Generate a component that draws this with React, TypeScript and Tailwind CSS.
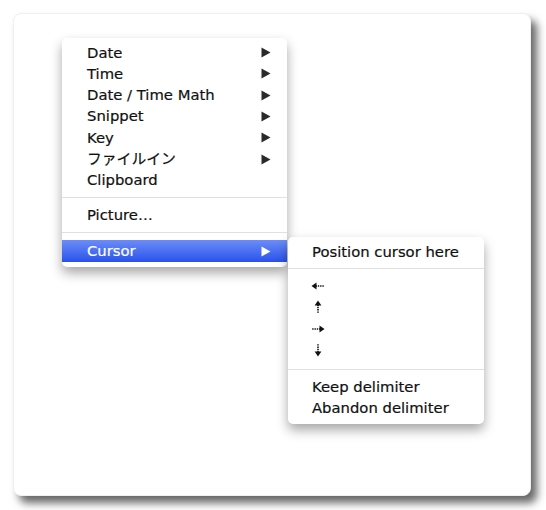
const font = { fontFamily: '"DejaVu Sans", "Noto Sans CJK JP", sans-serif' };

function Tri({ white }: { white?: boolean }) {
  return (
    <svg width="10" height="11" viewBox="0 0 10 11" className="shrink-0">
      <path d="M0.5 0.5 L9.5 5.5 L0.5 10.5 Z" fill={white ? "#ffffff" : "#2a2a2a"} />
    </svg>
  );
}

function Row({ label, sub, active }: { label: string; sub?: boolean; active?: boolean }) {
  return (
    <div
      className={`flex h-[21.3px] items-center justify-between pl-[25px] pr-[16px] ${
        active ? "bg-gradient-to-b from-[#6d8cf8] to-[#2a50ea] text-white" : "text-[#111]"
      }`}
    >
      <span className="whitespace-nowrap">{label}</span>
      {sub && <Tri white={active} />}
    </div>
  );
}

function DotArrow({ dir }: { dir: "left" | "up" | "right" | "down" }) {
  const rot = { left: 0, up: 90, right: 180, down: 270 }[dir];
  return (
    <svg width="14" height="14" viewBox="0 0 14 14">
      <g transform={`rotate(${rot} 7 7)`}>
        <path d="M4.5 7 H13.5" stroke="#111" strokeWidth="1.6" strokeDasharray="1.4 0.9" />
        <path d="M0.5 7 L5.5 3.6 L5.5 10.4 Z" fill="#111" />
      </g>
    </svg>
  );
}

function Sep({ cls }: { cls: string }) {
  return <div className={`h-px bg-[#e0e0e0] ${cls}`} />;
}

export default function App() {
  return (
    <div
      className="h-[510px] w-[546px] overflow-hidden bg-white pl-[13px] pt-[13px] text-[14.8px] [-webkit-text-stroke:0.2px_currentColor]"
      style={font}
    >
      <div className="h-[483px] w-[518px] rounded-[8px] border border-[#f0f0f0] bg-white shadow-[6px_7px_8px_rgba(0,0,0,0.6)]">
        <div className="ml-[48px] mt-[24px] flex items-start">
          <div className="w-[225px] rounded-[5px] bg-white pb-[5px] pt-[4px] shadow-[0_6px_12px_rgba(0,0,0,0.35)]">
            <Row label="Date" sub />
            <Row label="Time" sub />
            <Row label="Date / Time Math" sub />
            <Row label="Snippet" sub />
            <Row label="Key" sub />
            <Row label="ファイルイン" sub />
            <Row label="Clipboard" />
            <Sep cls="my-[6px]" />
            <Row label="Picture…" />
            <Sep cls="my-[7px]" />
            <Row label="Cursor" sub active />
          </div>
          <div className="ml-px mt-[199px] w-[196px] rounded-[5px] bg-white pb-[5px] pt-[4px] shadow-[0_6px_12px_rgba(0,0,0,0.35)]">
            <div className="flex h-[21.3px] items-center pl-[24px] text-[#111]">Position cursor here</div>
            <Sep cls="my-[6px]" />
            {(["left", "up", "right", "down"] as const).map((d) => (
              <div key={d} className="flex h-[21.3px] items-center pl-[23px]">
                <DotArrow dir={d} />
              </div>
            ))}
            <Sep cls="mb-[6px] mt-[9px]" />
            <div className="flex h-[21.3px] items-center pl-[24px] text-[#111]">Keep delimiter</div>
            <div className="flex h-[21.3px] items-center pl-[24px] text-[#111]">Abandon delimiter</div>
          </div>
        </div>
      </div>
    </div>
  );
}
